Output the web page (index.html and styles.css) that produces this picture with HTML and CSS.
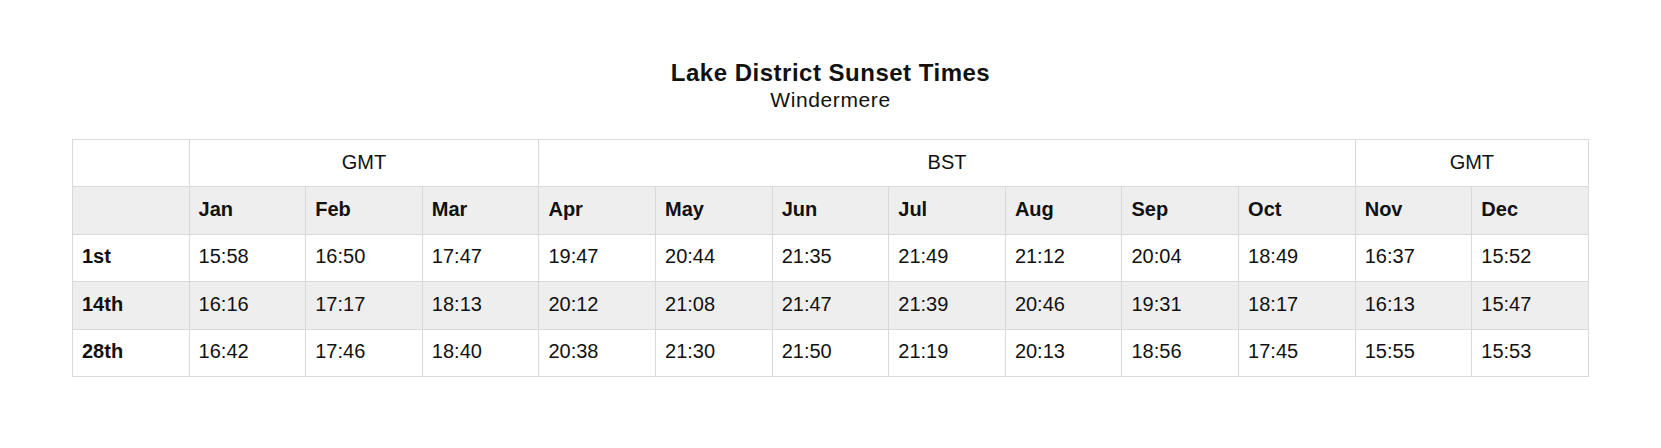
FILE: index.html
```html
<!DOCTYPE html>
<html lang="en">
<head>
<meta charset="utf-8">
<title>Lake District Sunset Times</title>
<link rel="stylesheet" href="styles.css">
</head>
<body>
<main class="page">
  <header class="heading">
    <h1 class="title">Lake District Sunset Times</h1>
    <p class="subtitle">Windermere</p>
  </header>
  <table class="times">
    <thead>
      <tr class="zones">
        <th class="blank"></th>
        <th colspan="3">GMT</th>
        <th colspan="7">BST</th>
        <th colspan="2">GMT</th>
      </tr>
      <tr class="months">
        <th></th>
        <th>Jan</th><th>Feb</th><th>Mar</th><th>Apr</th><th>May</th><th>Jun</th>
        <th>Jul</th><th>Aug</th><th>Sep</th><th>Oct</th><th>Nov</th><th>Dec</th>
      </tr>
    </thead>
    <tbody>
      <tr>
        <th>1st</th>
        <td>15:58</td><td>16:50</td><td>17:47</td><td>19:47</td><td>20:44</td><td>21:35</td>
        <td>21:49</td><td>21:12</td><td>20:04</td><td>18:49</td><td>16:37</td><td>15:52</td>
      </tr>
      <tr class="shaded">
        <th>14th</th>
        <td>16:16</td><td>17:17</td><td>18:13</td><td>20:12</td><td>21:08</td><td>21:47</td>
        <td>21:39</td><td>20:46</td><td>19:31</td><td>18:17</td><td>16:13</td><td>15:47</td>
      </tr>
      <tr>
        <th>28th</th>
        <td>16:42</td><td>17:46</td><td>18:40</td><td>20:38</td><td>21:30</td><td>21:50</td>
        <td>21:19</td><td>20:13</td><td>18:56</td><td>17:45</td><td>15:55</td><td>15:53</td>
      </tr>
    </tbody>
  </table>
</main>
</body>
</html>
```

FILE: styles.css
```css
html, body {
  margin: 0;
  padding: 0;
  background: #ffffff;
}

body {
  font-family: "Liberation Sans", Arial, Helvetica, sans-serif;
  color: #111111;
}

.page {
  padding: 61px 72px 0 72px;
}

.heading {
  text-align: center;
}

.title {
  margin: 0;
  font-size: 24px;
  line-height: 24px;
  font-weight: bold;
  letter-spacing: 0.5px;
}

.subtitle {
  margin: 3px 0 0 0;
  font-size: 21px;
  line-height: 24px;
  letter-spacing: 0.6px;
}

.times {
  margin-top: 27px;
  width: 1517px;
  table-layout: fixed;
  border-collapse: collapse;
  font-size: 20px;
}

.times th,
.times td {
  height: 47.4px;
  padding: 0 0 2px 9px;
  border: 1px solid #d9d9d9;
  text-align: left;
  vertical-align: middle;
  font-weight: normal;
  box-sizing: border-box;
}

.times th {
  font-weight: bold;
}

.times .zones th {
  font-weight: normal;
  text-align: center;
  padding: 0 0 2px 0;
}

.times .months th,
.times .shaded th,
.times .shaded td {
  background: #eeeeee;
}
```
